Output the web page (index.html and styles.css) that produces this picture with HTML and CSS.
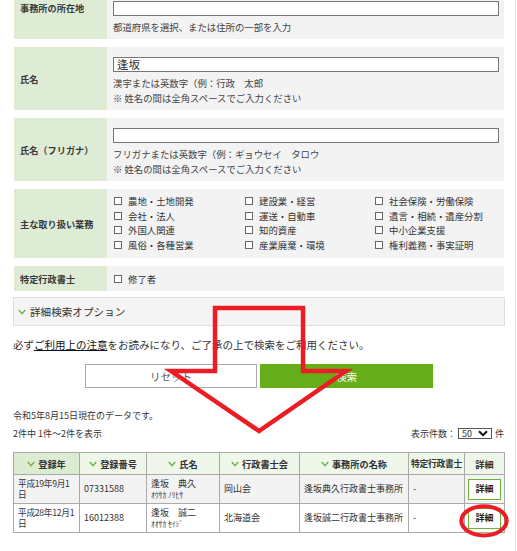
FILE: index.html
```html
<!DOCTYPE html>
<html lang="ja">
<head>
<meta charset="utf-8">
<title>検索</title>
<link rel="stylesheet" href="styles.css">
</head>
<body>
<div class="page">
  <div class="form">
    <div class="frow">
      <div class="flabel">事務所の所在地</div>
      <div class="fval">
        <div class="pref"></div>
        <div class="inp"></div>
        <p class="help">都道府県を選択、または住所の一部を入力</p>
      </div>
    </div>
    <div class="frow">
      <div class="flabel">氏名</div>
      <div class="fval">
        <div class="inp">逢坂</div>
        <p class="help">漢字または英数字（例：行政　太郎<br>※ 姓名の間は全角スペースでご入力ください</p>
      </div>
    </div>
    <div class="frow">
      <div class="flabel">氏名（フリガナ）</div>
      <div class="fval">
        <div class="inp"></div>
        <p class="help">フリガナまたは英数字（例：ギョウセイ　タロウ<br>※ 姓名の間は全角スペースでご入力ください</p>
      </div>
    </div>
    <div class="frow">
      <div class="flabel">主な取り扱い業務</div>
      <div class="fval checks">
        <label class="chk"><span class="box"></span>農地・土地開発</label>
        <label class="chk"><span class="box"></span>建設業・経営</label>
        <label class="chk"><span class="box"></span>社会保険・労働保険</label>
        <label class="chk"><span class="box"></span>会社・法人</label>
        <label class="chk"><span class="box"></span>運送・自動車</label>
        <label class="chk"><span class="box"></span>遺言・相続・遺産分割</label>
        <label class="chk"><span class="box"></span>外国人関連</label>
        <label class="chk"><span class="box"></span>知的資産</label>
        <label class="chk"><span class="box"></span>中小企業支援</label>
        <label class="chk"><span class="box"></span>風俗・各種営業</label>
        <label class="chk"><span class="box"></span>産業廃棄・環境</label>
        <label class="chk"><span class="box"></span>権利義務・事実証明</label>
      </div>
    </div>
    <div class="frow short">
      <div class="flabel">特定行政書士</div>
      <div class="fval single">
        <label class="chk"><span class="box"></span>修了者</label>
      </div>
    </div>
  </div>

  <div class="option">
    <svg class="chev" width="8" height="6" viewBox="0 0 8 6"><path d="M0.8 1 L4 4.6 L7.2 1" fill="none" stroke="#6cb33f" stroke-width="1.4"/></svg>
    <span>詳細検索オプション</span>
  </div>

  <p class="notice">必ず<a class="link">ご利用上の注意</a>をお読みになり、ご了承の上で検索をご利用ください。</p>

  <div class="buttons">
    <div class="btn reset">リセット</div>
    <div class="btn search">検索</div>
  </div>

  <p class="meta">令和5年8月15日現在のデータです。</p>
  <div class="count">
    <span>2件中 1件～2件を表示</span>
    <span class="perpage">表示件数：<span class="sel">50<svg width="10" height="7" viewBox="0 0 10 7"><path d="M1 1.2 L5 5.2 L9 1.2" fill="none" stroke="#111" stroke-width="2"/></svg></span>件</span>
  </div>

  <table class="results">
    <colgroup>
      <col class="c1"><col class="c2"><col class="c3"><col class="c4"><col class="c5"><col class="c6"><col class="c7">
    </colgroup>
    <thead>
      <tr>
        <th class="sorted"><svg class="chev" width="8" height="6" viewBox="0 0 8 6"><path d="M0.8 1 L4 4.6 L7.2 1" fill="none" stroke="#6cb33f" stroke-width="1.4"/></svg>登録年</th>
        <th><svg class="chev" width="8" height="6" viewBox="0 0 8 6"><path d="M0.8 1 L4 4.6 L7.2 1" fill="none" stroke="#6cb33f" stroke-width="1.4"/></svg>登録番号</th>
        <th><svg class="chev" width="8" height="6" viewBox="0 0 8 6"><path d="M0.8 1 L4 4.6 L7.2 1" fill="none" stroke="#6cb33f" stroke-width="1.4"/></svg>氏名</th>
        <th><svg class="chev" width="8" height="6" viewBox="0 0 8 6"><path d="M0.8 1 L4 4.6 L7.2 1" fill="none" stroke="#6cb33f" stroke-width="1.4"/></svg>行政書士会</th>
        <th><svg class="chev" width="8" height="6" viewBox="0 0 8 6"><path d="M0.8 1 L4 4.6 L7.2 1" fill="none" stroke="#6cb33f" stroke-width="1.4"/></svg>事務所の名称</th>
        <th class="tight">特定行政書士</th>
        <th>詳細</th>
      </tr>
    </thead>
    <tbody>
      <tr class="odd">
        <td class="date">平成19年9月1日</td>
        <td>07331588</td>
        <td>逢坂　典久<br><span class="kana">ｵｳｻｶ ﾉﾘﾋｻ</span></td>
        <td>岡山会</td>
        <td>逢坂典久行政書士事務所</td>
        <td>-</td>
        <td class="ctr"><span class="detail">詳細</span></td>
      </tr>
      <tr>
        <td class="date">平成28年12月1日</td>
        <td>16012388</td>
        <td>逢坂　誠二<br><span class="kana">ｵｵｻｶ ｾｲｼﾞ</span></td>
        <td>北海道会</td>
        <td>逢坂誠二行政書士事務所</td>
        <td>-</td>
        <td class="ctr"><span class="detail">詳細</span></td>
      </tr>
    </tbody>
  </table>
</div>

<svg class="annot" width="517" height="551" viewBox="0 0 517 551">
  <polygon points="215,308 303,308 303,371 346,371 259,431 171,371 215,371" fill="none" stroke="#ec1c24" stroke-width="4.5" stroke-linejoin="miter"/>
  <ellipse cx="484" cy="520.8" rx="22.7" ry="14.6" fill="none" stroke="#ec1c24" stroke-width="4"/>
</svg>
</body>
</html>
```

FILE: styles.css
```css
html, body {
  margin: 0;
  padding: 0;
  background: #fff;
}
body {
  font-family: "Noto Sans CJK JP", "Noto Sans", sans-serif;
  font-size: 9.4px;
  color: #333;
  position: relative;
  width: 517px;
  height: 551px;
  overflow: hidden;
}
.page {
  width: 516px;
  box-sizing: border-box;
  border-right: 1px solid #e6e6e6;
  margin-top: -24px;
  padding: 0 10px 40px 13px;
}
.form {
  margin: 0 1px;
  display: flex;
  flex-direction: column;
  gap: 8px;
}
.frow {
  display: grid;
  grid-template-columns: 93px 1fr;
}
.flabel {
  background: #deecd6;
  display: flex;
  align-items: center;
  padding-left: 6px;
  font-weight: bold;
  font-size: 9.2px;
  color: #3a3a3a;
}
.fval {
  background: #f3f3f3;
  padding: 10px 5px 4px 6px;
}
.pref {
  height: 11px;
  margin-bottom: 4px;
}
.inp {
  box-sizing: border-box;
  height: 15px;
  width: 386px;
  border: 1px solid #767676;
  background: #fff;
  font-size: 11.5px;
  line-height: 12px;
  padding-left: 3px;
  color: #333;
}
.help {
  margin: 4px 0 0;
  line-height: 15px;
  color: #444;
}
.checks {
  display: grid;
  grid-template-columns: 131px 130px 1fr;
  grid-auto-rows: 14.5px;
  padding: 5px 5px 6px 6px;
}
.single {
  display: flex;
  align-items: center;
  padding: 0 5px 0 6px;
  height: 25px;
}
.chk {
  display: flex;
  align-items: center;
  gap: 6px;
  color: #333;
}
.box {
  box-sizing: border-box;
  width: 8px;
  height: 8px;
  margin-left: 1px;
  border: 1px solid #666;
  background: #fff;
  flex: none;
}
.option {
  margin-top: 6px;
  box-sizing: border-box;
  height: 29px;
  border: 1px solid #dedede;
  background: #f4f4f4;
  display: flex;
  align-items: center;
  gap: 4px;
  padding-left: 4px;
  font-size: 10.6px;
  color: #333;
}
.notice {
  margin: 11px 0 0;
  font-size: 10.5px;
  line-height: 16px;
  color: #333;
}
.link {
  color: #111;
  text-decoration: underline;
}
.buttons {
  margin-top: 11px;
  display: flex;
  justify-content: center;
  gap: 3px;
}
.btn {
  box-sizing: border-box;
  width: 172px;
  height: 24px;
  display: flex;
  align-items: center;
  justify-content: center;
  font-size: 10.5px;
}
.reset {
  border: 1px solid #aaa;
  background: #fff;
  color: #555;
}
.search {
  width: 173px;
  background: #65ae19;
  color: #fff;
}
.meta {
  margin: 21px 0 0;
  line-height: 14px;
  font-size: 9px;
}
.count {
  margin-top: 3px;
  height: 14px;
  display: flex;
  justify-content: space-between;
  align-items: center;
  font-size: 9px;
  padding-right: 1px;
}
.perpage {
  display: flex;
  align-items: center;
}
.sel {
  box-sizing: border-box;
  width: 34px;
  height: 11px;
  border: 1px solid #555;
  display: inline-flex;
  align-items: center;
  justify-content: space-between;
  padding: 0 3px 0 3px;
  margin: 0 3px 0 2px;
  font-size: 9px;
  line-height: 9px;
  background: #fff;
}
.results {
  margin-top: 12px;
  width: 491px;
  border-collapse: collapse;
  table-layout: fixed;
  font-size: 9px;
}
.c1 { width: 66px; }
.c2 { width: 67px; }
.c3 { width: 73px; }
.c4 { width: 80px; }
.c5 { width: 109px; }
.c6 { width: 56px; }
.c7 { width: 40px; }
.results th, .results td {
  border: 1px solid #aaa;
}
.results th {
  height: 21px;
  padding: 0;
  background: #eef7e9;
  font-weight: bold;
  font-size: 9.2px;
  text-align: center;
  white-space: nowrap;
  color: #333;
}
.results th.tight {
  font-size: 8.8px;
  letter-spacing: -0.3px;
}
.results th.sorted {
  background: #dcecd3;
}
.results th .chev {
  margin-right: 3px;
  vertical-align: 1px;
}
.results td {
  height: 28px;
  padding: 0 4px;
  line-height: 11.5px;
  vertical-align: middle;
  color: #333;
}
.results td.date {
  padding: 0 3px 0 4px;
  font-size: 8.7px;
  letter-spacing: -0.3px;
  word-break: break-all;
}
.results tr.odd td {
  background: #f3f3f3;
}
.kana {
  font-size: 7.6px;
}
.results td.ctr {
  text-align: center;
  padding: 0;
}
.detail {
  box-sizing: border-box;
  display: inline-flex;
  align-items: center;
  justify-content: center;
  width: 33px;
  height: 21px;
  border: 1px solid #6cb23a;
  background: #fff;
  font-weight: bold;
  color: #222;
}
.annot {
  position: absolute;
  top: 0;
  left: 0;
  pointer-events: none;
}
```
